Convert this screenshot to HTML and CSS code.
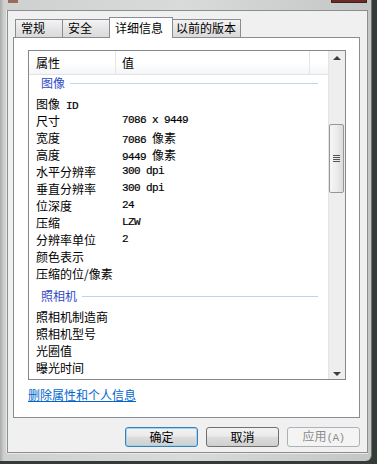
FILE: index.html
```html
<!DOCTYPE html>
<html lang="zh-CN">
<head>
    <meta charset="UTF-8">
    <title>属性</title>
    <link rel="stylesheet" href="styles.css">
</head>
<body>
    <div class="frame">
        <div class="caption">
            <span class="caption-icon"></span>
            <span class="caption-close"></span>
        </div>
        <div class="client">
            <div class="tabs">
                <div class="tab t1">常规</div>
                <div class="tab t2">安全</div>
                <div class="tab t3 active">详细信息</div>
                <div class="tab t4">以前的版本</div>
            </div>
            <div class="panel">
                <div class="list">
                    <div class="list-main">
                        <div class="header">
                            <div class="hcol hname">属性</div>
                            <div class="hcol hval">值</div>
                            <div class="hcol hrest"></div>
                        </div>
                        <div class="group first"><span>图像</span></div>
                        <div class="row"><span class="name">图像<span class="mono"> ID</span></span><span class="val"></span></div>
                        <div class="row"><span class="name">尺寸</span><span class="val mono">7086 x 9449</span></div>
                        <div class="row"><span class="name">宽度</span><span class="val"><span class="mono">7086 </span>像素</span></div>
                        <div class="row"><span class="name">高度</span><span class="val"><span class="mono">9449 </span>像素</span></div>
                        <div class="row"><span class="name">水平分辨率</span><span class="val mono">300 dpi</span></div>
                        <div class="row"><span class="name">垂直分辨率</span><span class="val mono">300 dpi</span></div>
                        <div class="row"><span class="name">位深度</span><span class="val mono">24</span></div>
                        <div class="row"><span class="name">压缩</span><span class="val mono">LZW</span></div>
                        <div class="row"><span class="name">分辨率单位</span><span class="val mono">2</span></div>
                        <div class="row"><span class="name">颜色表示</span><span class="val"></span></div>
                        <div class="row"><span class="name">压缩的位/像素</span><span class="val"></span></div>
                        <div class="group"><span>照相机</span></div>
                        <div class="row"><span class="name">照相机制造商</span><span class="val"></span></div>
                        <div class="row"><span class="name">照相机型号</span><span class="val"></span></div>
                        <div class="row"><span class="name">光圈值</span><span class="val"></span></div>
                        <div class="row"><span class="name">曝光时间</span><span class="val"></span></div>
                    </div>
                    <div class="scrollbar">
                        <div class="sb-btn"><span class="arrow-up"></span></div>
                        <div class="sb-track">
                            <div class="sb-thumb">
                                <span class="grip"></span>
                            </div>
                        </div>
                        <div class="sb-btn"><span class="arrow-down"></span></div>
                    </div>
                </div>
                <a class="remove-link" href="#">删除属性和个人信息</a>
            </div>
            <div class="buttons">
                <button class="btn default">确定</button>
                <button class="btn">取消</button>
                <button class="btn disabled">应用<span class="mono">(A)</span></button>
            </div>
        </div>
    </div>
</body>
</html>
```

FILE: styles.css
```css
body {
    margin: 0;
    padding: 0;
    width: 377px;
    height: 464px;
    overflow: hidden;
    background: #353b37;
    font-family: "Noto Sans CJK SC", "Liberation Sans", sans-serif;
    font-size: 12px;
    color: #000;
}
.mono {
    font-family: "Liberation Mono", "Noto Sans CJK SC", monospace;
    font-size: 11px;
    letter-spacing: -0.6px;
    -webkit-text-stroke: 0.2px #000;
}
.frame {
    width: 372px;
    height: 461px;
    box-sizing: border-box;
    padding: 0 3px 8px 7px;
    background: linear-gradient(to right, #a9abab, #cfd1d1 4px, #d9dbdb 50%, #c4c6c6);
    border-bottom-right-radius: 6px;
    border-right: 1px solid #6f7372;
}
.caption {
    height: 10px;
    display: flex;
    justify-content: space-between;
    align-items: flex-start;
}
.caption-icon {
    width: 10px;
    height: 3px;
    margin-left: 1px;
    background: #9b6b5a;
}
.caption-close {
    width: 34px;
    height: 2px;
    margin-right: 1px;
    background: #6b2a25;
    border: 1px solid #3f2220;
    border-top: none;
}
.client {
    height: 443px;
    box-sizing: border-box;
    border: 1px solid #8c8e8e;
    background: #f0f0f0;
    padding: 6px 0 0 5px;
    box-shadow: -1px 0 0 #e8e9e9, 0 1px 0 #e8e9e9;
}
.tabs {
    display: flex;
    align-items: flex-end;
    height: 20px;
    padding-left: 2px;
}
.tab {
    height: 18px;
    box-sizing: border-box;
    border: 1px solid #898c95;
    border-bottom: none;
    background: linear-gradient(#f3f3f3, #e5e5e5 50%, #dadada);
    line-height: 16px;
    padding-left: 5px;
    margin-right: -1px;
}
.t1 { width: 48px; }
.t2 { width: 48px; }
.t3 { width: 64px; }
.t4 { width: 69px; padding-left: 3px; }
.tab.active {
    height: 21px;
    margin-bottom: -1px;
    background: #fff;
    position: relative;
    z-index: 1;
    padding-top: 2px;
}
.panel {
    width: 347px;
    height: 381px;
    box-sizing: border-box;
    border: 1px solid #898c95;
    background: #fff;
    padding: 12px 0 0 14px;
}
.list {
    width: 318px;
    height: 330px;
    box-sizing: border-box;
    border: 1px solid #828790;
    display: flex;
}
.list-main {
    flex: 1;
    overflow: hidden;
}
.header {
    display: flex;
    height: 24px;
    box-sizing: border-box;
    border-bottom: 1px solid #e1e3e6;
    background: linear-gradient(#ffffff, #ffffff 50%, #f4f5f7);
}
.hcol {
    line-height: 23px;
    box-sizing: border-box;
    border-right: 1px solid #e3e5e8;
}
.hname {
    width: 87px;
    padding-left: 7px;
}
.hval {
    width: 194px;
    padding-left: 6px;
}
.hrest {
    flex: 1;
    border-right: none;
}
.group {
    height: 20px;
    display: flex;
    align-items: flex-start;
    padding-left: 12px;
    color: #2f4bc6;
}
.group span {
    line-height: 16px;
}
.group::after {
    content: "";
    flex: 1;
    height: 1px;
    margin: 8px 10px 0 5px;
    background: #c3d4ea;
}
.group:not(.first) {
    margin-top: 6px;
}
.row {
    display: flex;
    height: 17px;
    line-height: 17px;
    padding-left: 7px;
    white-space: nowrap;
}
.row .name {
    width: 86px;
}
.row .val {
    flex: 1;
}
.scrollbar {
    width: 17px;
    display: flex;
    flex-direction: column;
    background: #eeeeee;
    border-left: 1px solid #e4e4e4;
    box-sizing: border-box;
}
.sb-btn {
    height: 17px;
    display: flex;
    align-items: center;
    justify-content: center;
}
.arrow-up {
    width: 0;
    height: 0;
    border-left: 4px solid transparent;
    border-right: 4px solid transparent;
    border-bottom: 4px solid #3c3c3c;
    margin-top: -4px;
}
.arrow-down {
    width: 0;
    height: 0;
    border-left: 4px solid transparent;
    border-right: 4px solid transparent;
    border-top: 4px solid #3c3c3c;
    margin-top: 6px;
}
.sb-track {
    flex: 1;
    padding-top: 56px;
}
.sb-thumb {
    height: 69px;
    margin: 0 1px 0 0;
    box-sizing: border-box;
    border: 1px solid #979797;
    border-radius: 2px;
    background: linear-gradient(to right, #f6f6f6, #ececec 50%, #dcdcdc);
    display: flex;
    align-items: center;
    justify-content: center;
}
.grip {
    width: 7px;
    height: 7px;
    background: repeating-linear-gradient(#555 0, #555 1px, transparent 1px, transparent 2px);
}
.remove-link {
    display: block;
    width: max-content;
    margin-top: 7px;
    line-height: 16px;
    color: #0066cc;
    text-decoration: underline;
}
.buttons {
    display: flex;
    justify-content: flex-end;
    gap: 8px;
    padding: 9px 7px 0 0;
}
.btn {
    width: 73px;
    height: 20px;
    padding: 0;
    font-family: "Noto Sans CJK SC", sans-serif;
    font-size: 12px;
    line-height: 16px;
    color: #000;
    border: 1px solid #707070;
    border-radius: 3px;
    background: linear-gradient(#f2f2f2, #ebebeb 45%, #dddddd 50%, #cfcfcf);
}
.btn.default {
    border-color: #3c7fb1;
    box-shadow: inset 0 0 0 1px #9ed5f2;
}
.btn.disabled {
    color: #8c8c8c;
    border-color: #adb2b5;
    background: #f4f4f4;
}
.btn.disabled .mono {
    -webkit-text-stroke: 0;
}
```
